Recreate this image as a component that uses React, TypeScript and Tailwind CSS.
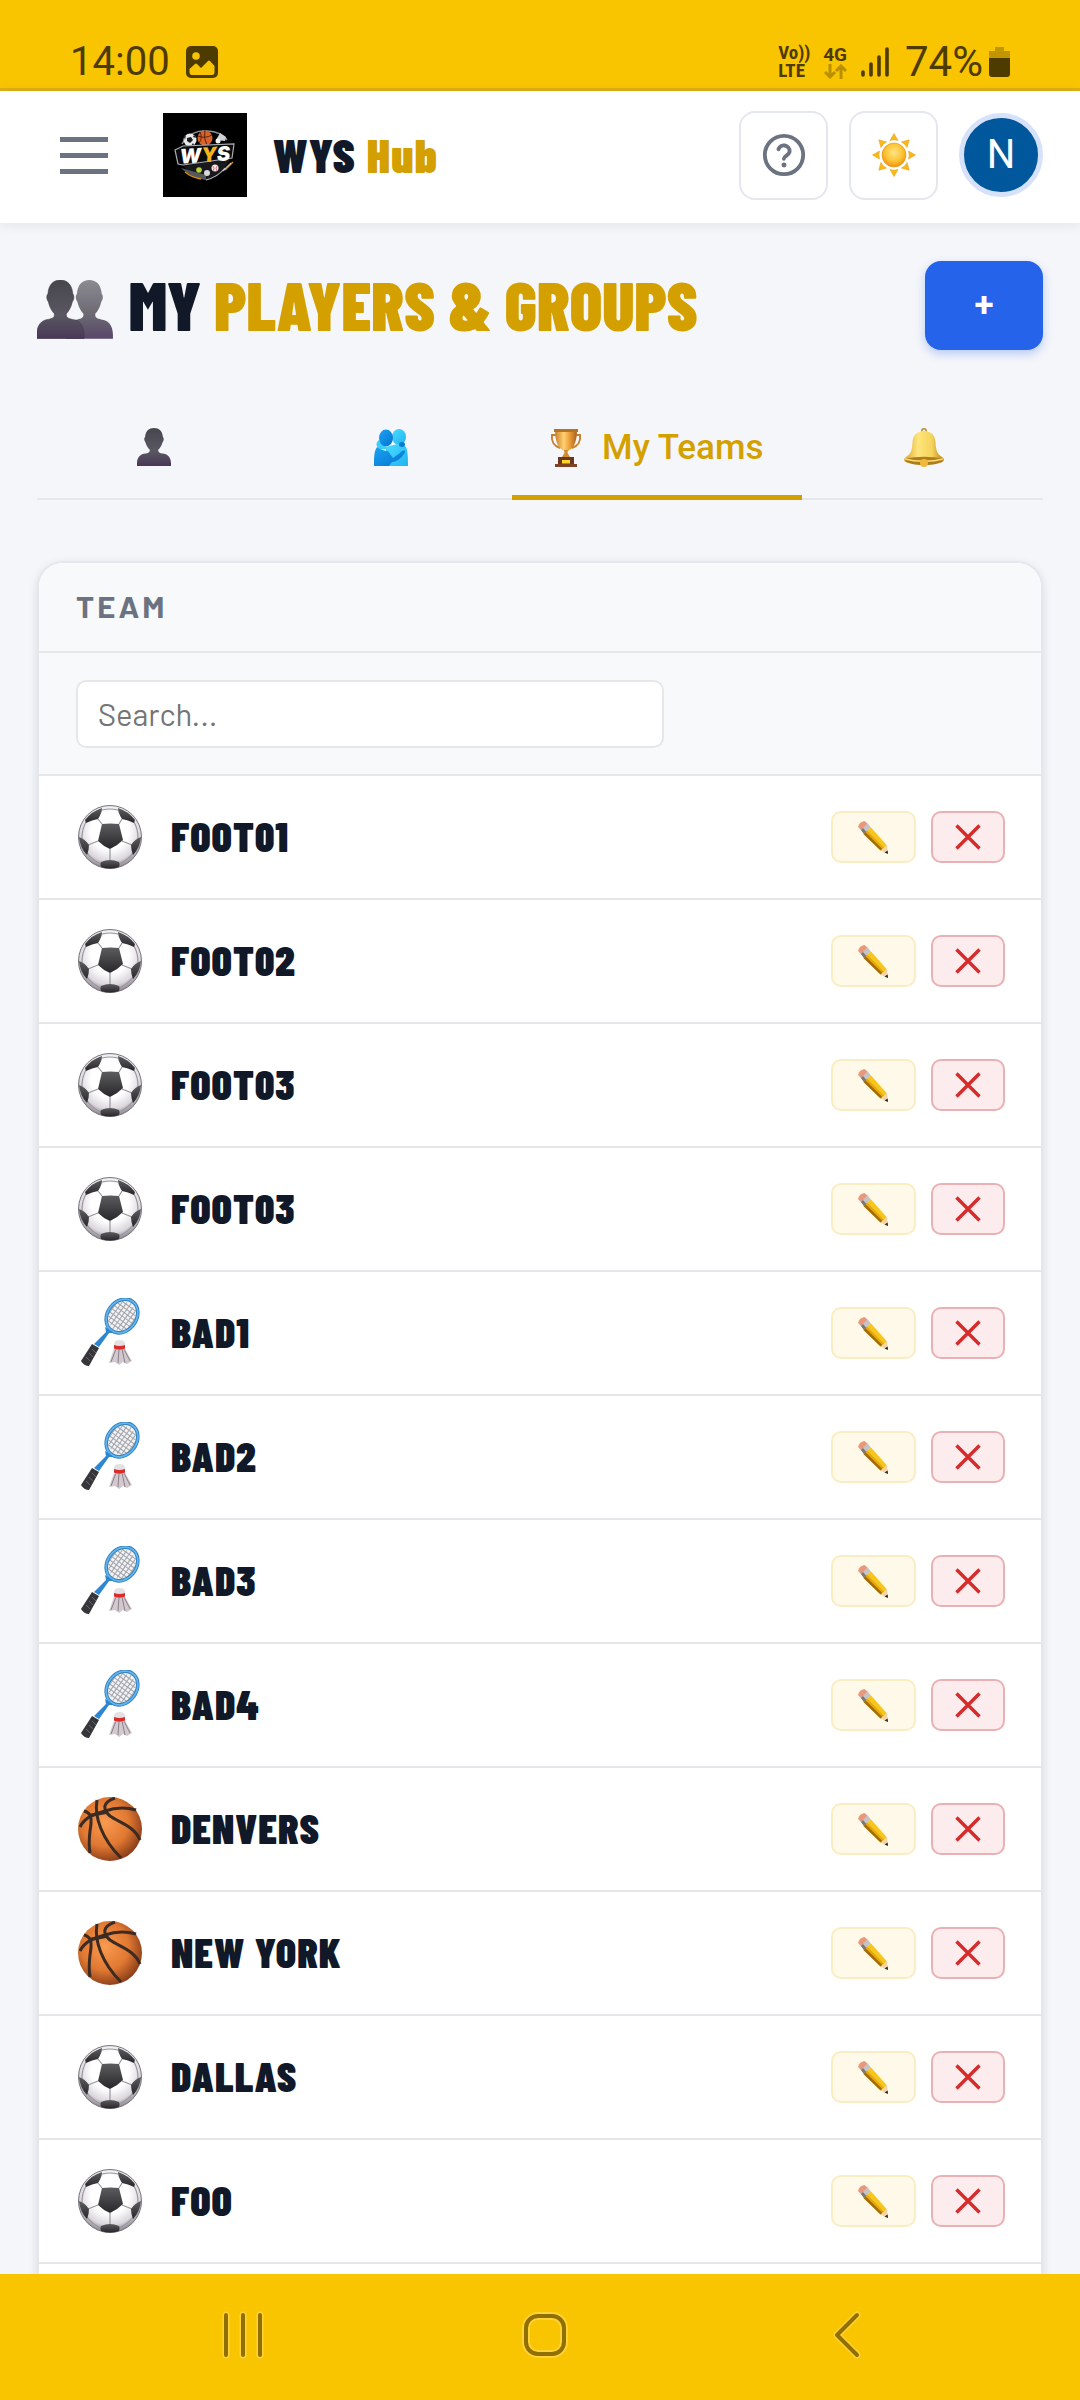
import React from "react";

type Sport = "soccer" | "badminton" | "basketball";

const TEAMS: { name: string; sport: Sport }[] = [
  { name: "FOOT01", sport: "soccer" },
  { name: "FOOT02", sport: "soccer" },
  { name: "FOOT03", sport: "soccer" },
  { name: "FOOT03", sport: "soccer" },
  { name: "BAD1", sport: "badminton" },
  { name: "BAD2", sport: "badminton" },
  { name: "BAD3", sport: "badminton" },
  { name: "BAD4", sport: "badminton" },
  { name: "DENVERS", sport: "basketball" },
  { name: "NEW YORK", sport: "basketball" },
  { name: "DALLAS", sport: "soccer" },
  { name: "FOO", sport: "soccer" },
];

/* Gradients shared by every illustration on the page. */
function Gradients() {
  return (
    <svg className="absolute size-0" aria-hidden="true">
      <defs>
        <radialGradient id="gBall" cx="0.5" cy="0.4" r="0.6">
          <stop offset="0.5" stopColor="#ffffff" />
          <stop offset="0.8" stopColor="#dcd8de" />
          <stop offset="1" stopColor="#86808a" />
        </radialGradient>
        <linearGradient id="gPatch" x1="0" y1="0" x2="0" y2="1">
          <stop offset="0" stopColor="#5c5c5e" />
          <stop offset="1" stopColor="#28262a" />
        </linearGradient>
        <radialGradient id="gBasket" cx="0.42" cy="0.4" r="0.62">
          <stop offset="0" stopColor="#fa9a50" />
          <stop offset="0.6" stopColor="#e07832" />
          <stop offset="1" stopColor="#8c3f1a" />
        </radialGradient>
        <radialGradient id="gSun" cx="0.5" cy="0.4" r="0.6">
          <stop offset="0" stopColor="#ffe488" />
          <stop offset="0.6" stopColor="#fcc433" />
          <stop offset="1" stopColor="#ee9113" />
        </radialGradient>
        <linearGradient id="gBustDark" x1="0" y1="0" x2="0" y2="1">
          <stop offset="0" stopColor="#47464d" />
          <stop offset="0.6" stopColor="#5a5762" />
          <stop offset="1" stopColor="#493757" />
        </linearGradient>
        <linearGradient id="gBustLight" x1="0" y1="0" x2="0" y2="1">
          <stop offset="0" stopColor="#8c8b91" />
          <stop offset="0.6" stopColor="#6b6872" />
          <stop offset="1" stopColor="#58466a" />
        </linearGradient>
        <linearGradient id="gGold" x1="0" y1="0" x2="1" y2="0">
          <stop offset="0" stopColor="#c9802a" />
          <stop offset="0.4" stopColor="#ffd071" />
          <stop offset="0.65" stopColor="#eda03c" />
          <stop offset="1" stopColor="#a8611c" />
        </linearGradient>
        <linearGradient id="gBell" x1="0" y1="0" x2="1" y2="0">
          <stop offset="0" stopColor="#d9a52c" />
          <stop offset="0.35" stopColor="#ffe57c" />
          <stop offset="0.7" stopColor="#f5d35c" />
          <stop offset="1" stopColor="#b98318" />
        </linearGradient>
        <linearGradient id="gHugDark" x1="0" y1="0" x2="1" y2="1">
          <stop offset="0" stopColor="#1aa3f5" />
          <stop offset="1" stopColor="#0672cf" />
        </linearGradient>
        <linearGradient id="gHugLight" x1="0" y1="0" x2="1" y2="1">
          <stop offset="0" stopColor="#4cdcff" />
          <stop offset="1" stopColor="#1fb2f0" />
        </linearGradient>
      </defs>
    </svg>
  );
}

const BUST =
  "M13 0 C19 0 23 4 23.500 11 C24.500 12 24.800 14 24 16 C23.500 17 23 17.500 23 18 C22 22 20 25 18 27 V28 C18 30 20 31 23 31.500 C29 32 33 36 33 44 V47 H-7 V44 C-7 36 -3 32 3 31.500 C6 31 8 30 8 28 V27 C6 25 4 22 3 18 C3 17.500 2.500 17 2 16 C1.200 14 1.500 12 2.500 11 C3 4 7 0 13 0 Z";

function Bust({ className }: { className: string }) {
  return (
    <svg className={className} viewBox="-7 0 40 47" preserveAspectRatio="none" aria-hidden="true">
      <path d={BUST} fill="url(#gBustDark)" />
    </svg>
  );
}

function BustPair({ className }: { className: string }) {
  return (
    <svg className={className} viewBox="0 0 76 59" aria-hidden="true">
      <g transform="translate(37 0) scale(1.18 1.25)">
        <path d={BUST} fill="url(#gBustLight)" />
      </g>
      <g transform="translate(8 0) scale(1.18 1.25)">
        <path d={BUST} fill="url(#gBustDark)" stroke="#3f3a49" strokeWidth="0.500" />
      </g>
    </svg>
  );
}

function Hug({ className }: { className: string }) {
  return (
    <svg className={className} viewBox="0 0 34 37" aria-hidden="true">
      <ellipse cx="25" cy="8" rx="7" ry="8" fill="url(#gHugLight)" />
      <path d="M12 18 C19 16 27 13 32 18 C34 22 34 30 34 37 H12 Z" fill="url(#gHugLight)" />
      <path d="M5 11 C1 14 2 18 6 20 L14 20 L9 15 Z" fill="#3ccffa" />
      <path d="M3 18 C6 20 10 22 14 22 L19 29 L26 24 C28 21 32 21 31 23 C30 26 24 33 18 33 L15 37 H0 C0 29 0 22 3 18 Z" fill="url(#gHugDark)" />
      <ellipse cx="12" cy="9" rx="7" ry="8.500" fill="url(#gHugDark)" />
      <ellipse cx="28" cy="15.500" rx="3" ry="2.500" fill="#087bd6" />
    </svg>
  );
}

function Trophy({ className }: { className: string }) {
  return (
    <svg className={className} viewBox="0 0 32 38" aria-hidden="true">
      <path d="M7 6 H2 C1 12 4 17 10 19 M25 6 H30 C31 12 28 17 22 19" fill="none" stroke="#c4802c" strokeWidth="2" />
      <path d="M5 1 H27 C27 10 25 19 18 22 H14 C7 19 5 10 5 1 Z" fill="url(#gGold)" />
      <path d="M4 0 H28 V3 H4 Z" fill="#b47424" />
      <path d="M14 21 H18 L17.500 24 L20 28 H12 L14.500 24 Z" fill="#cf8a35" />
      <path d="M8 28 H24 V36 H8 Z" fill="#6e3520" />
      <path d="M12 31 H20 V34.500 H12 Z" fill="#ffd72e" />
      <path d="M5 35 H27 V38 H5 Z" fill="#804327" />
    </svg>
  );
}

function Bell({ className }: { className: string }) {
  return (
    <svg className={className} viewBox="0 0 40 39" aria-hidden="true">
      <circle cx="20" cy="3" r="2.200" fill="none" stroke="#b98a22" strokeWidth="1.500" />
      <path d="M20 3 C28 3 31 8 31.500 14 C32 22 33 26 38 29 C41 31 40 34 37 34.500 C26 37 14 37 3 34.500 C0 34 -1 31 2 29 C7 26 8 22 8.500 14 C9 8 12 3 20 3 Z" fill="url(#gBell)" />
      <path d="M1 31 C12 28 28 28 39 31 C40 35 30 37 20 37 C10 37 0 35 1 31 Z" fill="#b07d1a" />
      <path d="M1 31 C12 34 28 34 39 31" fill="none" stroke="#f8dd74" strokeWidth="1.500" />
      <circle cx="20" cy="35" r="4" fill="#f0b93b" />
    </svg>
  );
}

function Sun({ className }: { className: string }) {
  return (
    <svg className={className} viewBox="-22 -22 44 44" aria-hidden="true">
      {[0, 45, 90, 135, 180, 225, 270, 315].map((a) => (
        <path key={a} d="M0 -21.500 L4 -14.500 Q0 -16 -4 -14.500 Z" fill="#f9b816" stroke="#e89a10" strokeWidth="0.500" transform={`rotate(${a})`} />
      ))}
      <circle r="12" fill="url(#gSun)" stroke="#e8941a" strokeWidth="0.600" />
    </svg>
  );
}

function Soccer({ className }: { className: string }) {
  return (
    <svg className={className} viewBox="0 0 64 64" aria-hidden="true">
      <circle cx="32" cy="32" r="31.500" fill="url(#gBall)" stroke="#77727c" strokeWidth="1" />
      <path d="M24 19 L20 14 M41 19 L44 14 M20 36 L10 40 M44 36 L54 40 M32 44 V55 M24 5 Q32 3 40 5 M8 17 Q4 24 4 33 M56 17 Q60 24 60 33 M9 48 Q14 55 23 59 M55 48 Q50 55 41 59" fill="none" stroke="#98959c" strokeWidth="1.200" />
      <g fill="url(#gPatch)">
        <path d="M24 19 Q32 18 41 19 L45 35 Q39 41 32 44 Q25 41 20 36 Z" />
        <path d="M7 15 Q14 6 24 3 Q24 8 20 14 Q14 15 8 18 Z" />
        <path d="M57 15 Q50 6 40 3 Q40 8 44 14 Q50 15 56 18 Z" />
        <path d="M1 32 Q7 34 11 40 Q11 45 9 50 Q2 43 1 32 Z" />
        <path d="M63 32 Q57 34 53 40 Q53 45 55 50 Q62 43 63 32 Z" />
        <path d="M23 57 Q32 53 41 57 Q42 59 41 62 Q32 65 23 62 Q22 59 23 57 Z" />
      </g>
    </svg>
  );
}

function Basketball({ className }: { className: string }) {
  return (
    <svg className={className} viewBox="0 0 64 64" aria-hidden="true">
      <circle cx="32" cy="32" r="32" fill="url(#gBasket)" />
      <g fill="none" stroke="#3c2b22" strokeWidth="3">
        <path d="M2 30 C7 20 16 17 27 14 C38 10 48 10 58 13" />
        <path d="M19 3 C16 20 24 42 43 61" />
        <path d="M6 14 C14 16 14 22 12 34 C11 42 11 50 12 56" />
        <path d="M37 1 C25 5 24 12 32 19 C42 26 56 29 62 43" />
      </g>
      <path d="M11 17 L30 13 L28 17 L13 20 Z" fill="#3c2b22" />
    </svg>
  );
}

function Badminton({ className }: { className: string }) {
  const strings = [-12, -8, -4, 0, 4, 8, 12];
  return (
    <svg className={className} viewBox="0 0 60 70" aria-hidden="true">
      <g transform="translate(42 18) rotate(36)">
        <ellipse rx="14.500" ry="18" fill="#f3f3f5" />
        <g stroke="#a2a4ab" strokeWidth="1">
          {strings.map((n) => (
            <path key={`v${n}`} d={`M${n} -${16 - Math.abs(n) * 0.6} V${16 - Math.abs(n) * 0.6}`} />
          ))}
          {strings.map((n) => (
            <path key={`h${n}`} d={`M-${13.5 - Math.abs(n) * 0.3} ${n} H${13.5 - Math.abs(n) * 0.3}`} />
          ))}
        </g>
        <ellipse rx="14.500" ry="18" fill="none" stroke="#2f7fbd" strokeWidth="3.600" />
        <ellipse rx="14.500" ry="18" fill="none" stroke="#62b4ee" strokeWidth="1.800" />
      </g>
      <path d="M25 29 L34 35 L29 35 L19 49 L14 46 L26 34 Z" fill="#2c86d0" />
      <path d="M12 46 L19 50 L9 68 Q4 68 1 63 Z" fill="#35353a" />
      <path d="M12 51 L16 55 M9 55 L13 59 M6 59 L10 63" stroke="#66666c" strokeWidth="1" />
      <path d="M34 51 L45 51 L52 63 L47 66 L43 64 L39 67 L35 64 L29 65 Z" fill="#d2c9ce" />
      <path d="M36 51 L31 64 M39 51 L38 65 M42 51 L45 65 M44 51 L50 63" stroke="#8c8188" strokeWidth="1" />
      <path d="M34 46 Q34 42 39.500 42 Q45 42 45 46 V51 Q39.500 53 34 51 Z" fill="#e2e2e2" />
      <path d="M34 47 Q39.500 49 45 47 V50.500 Q39.500 53 34 50.500 Z" fill="#dc2b2b" />
    </svg>
  );
}

function Pencil({ className }: { className: string }) {
  return (
    <svg className={className} viewBox="0 0 30 33" aria-hidden="true">
      <path d="M0 6 Q1 1 6.500 0 L10.500 3.500 L4 10 Z" fill="#e9987a" />
      <path d="M3 9 L9.500 2.500 L13 6.500 L6 13 Z" fill="#c4c4c8" />
      <path d="M3 9 L5 7 L8.500 11 L6 13 Z" fill="#77777e" />
      <path d="M5.500 13 L13 6.500 L29 24.500 L22.500 29.500 Z" fill="#f8c51c" />
      <path d="M5.500 13 L7.500 11 L24.500 28 L22.500 29.500 Z" fill="#a06a10" />
      <path d="M7.500 11 L9 9.500 L26 27 L24.500 28 Z" fill="#e0a50f" />
      <path d="M22.500 29.500 L29 24.500 L30 33 Z" fill="#f2d4a8" />
      <path d="M26.500 31.500 L29.700 29.500 L30 33 Z" fill="#2d2a2a" />
    </svg>
  );
}

function WysLogo({ className }: { className: string }) {
  return (
    <svg className={className} viewBox="0 0 84 84" role="img" aria-label="WYS logo">
      <rect width="84" height="84" fill="#000000" />
      <path d="M19 31 C24 21 35 17 45 18 C53 18 61 22 64 27" fill="none" stroke="#8f9296" strokeWidth="1.500" />
      <path d="M14 34 C18 56 28 64 43 67 C58 63 66 52 72 34 L60 46 L22 53 Z" fill="#17191c" />
      <path d="M18 55 C25 62 34 65 43 67 L43 62 C34 60 26 57 18 55 Z" fill="#55585d" />
      <path d="M22 59 C27 63 33 65 38 66 M62 57 L70 49" fill="none" stroke="#d68d18" strokeWidth="1.500" />
      <path d="M43 67 C51 65 58 60 62 55 M60 58 L68 50" fill="none" stroke="#b8bbc0" strokeWidth="1.200" />
      <circle cx="27" cy="27" r="6.500" fill="#e8e8ea" />
      <path d="M24 25 L28 24 L30 27 L27 30 L24 28 Z M21 24 L23 22 L22 27 Z M31 22 L33 25 L30 24 Z M28 33 L31 32 L30 30 Z" fill="#1b1b1d" />
      <circle cx="42" cy="25" r="7.500" fill="#d8622a" />
      <path d="M35 23 Q42 26 49 22 M42 17 Q40 25 44 32 M37 19 Q40 25 36 30" fill="none" stroke="#4a1d0c" strokeWidth="0.900" />
      <path d="M53 27 L57 20 L63 24 L62 28 Z" fill="#cfd2d6" />
      <circle cx="55" cy="28" r="2.500" fill="#f4f4f4" />
      <path d="M12 37 L20 33 L71 31 L69 45 L20 52 L15 51 Z" fill="#0b0c0e" stroke="#a9adb3" strokeWidth="1.200" />
      <text x="42" y="49" textAnchor="middle" fontFamily="Inter, sans-serif" fontSize="20" fontWeight="900" fontStyle="italic" fill="#ffffff" transform="rotate(-4 42 42)">
        W<tspan fill="#f5b21b">Y</tspan>S
      </text>
      <circle cx="36" cy="57" r="2.800" fill="#b9d438" />
      <circle cx="44" cy="60" r="3" fill="#d9d9dc" />
      <circle cx="52" cy="55" r="3.500" fill="#f1e9e9" />
      <path d="M50 53 Q52 55 50 58 M54 53 Q52 55 54 58" fill="none" stroke="#d14040" strokeWidth="0.700" />
    </svg>
  );
}

function SportIcon({ sport }: { sport: Sport }) {
  if (sport === "soccer") return <Soccer className="size-16" />;
  if (sport === "basketball") return <Basketball className="size-16" />;
  return <Badminton className="ml-0.5 h-[70px] w-[60px]" />;
}

function StatusBar() {
  return (
    <div className="flex h-[91px] shrink-0 items-end justify-between border-b-3 border-[#deae14] bg-[#f9c400] px-[70px] pb-0.5 font-[Roboto,sans-serif] text-[#4e3b00]">
      <div className="flex items-center gap-4">
        <span className="text-[40px] leading-[48px]">14:00</span>
        <svg className="size-8" viewBox="0 0 32 32" aria-hidden="true">
          <rect width="32" height="32" rx="5" fill="#4e3b00" />
          <circle cx="10" cy="10" r="3.800" fill="#f9c400" />
          <path d="M3.500 23 L9 18 Q10 17 11 18 L15 22 L22 15 Q23 14 24 15 L28.500 20 V26 Q28.500 29 26 29 H6 Q3.500 29 3.500 26 Z" fill="#f9c400" />
        </svg>
      </div>
      <div className="flex items-center">
        <div className="mr-3 flex w-[33px] flex-col font-['Roboto_Condensed',Roboto,sans-serif] text-[19px] leading-[18px] font-bold">
          <span>Vo))</span>
          <span>LTE</span>
        </div>
        <div className="mr-3.5 flex flex-col items-center text-[19px] leading-[18px] font-bold">
          <span>4G</span>
          <svg className="h-[15px] w-[23px]" viewBox="0 0 23 15" fill="none" stroke="#b98f00" strokeWidth="3" aria-hidden="true">
            <path d="M6 0 V13 M1 8 L6 13 L11 8 M17 15 V2 M12 7 L17 2 L22 7" />
          </svg>
        </div>
        <svg className="mr-4 h-[30px] w-7" viewBox="0 0 28 30" stroke="#4e3b00" strokeWidth="3.600" strokeLinecap="round" aria-hidden="true">
          <path d="M2 25 V28 M10 17 V28 M18 10 V28 M26 2 V28" />
        </svg>
        <span className="mr-1.5 text-[42px] leading-[48px]">74%</span>
        <svg className="h-[30px] w-[21px]" viewBox="0 0 21 30" aria-hidden="true">
          <path d="M6 0 H15 V4 H21 V12 H0 V4 H6 Z" fill="#c19600" />
          <path d="M0 11 H21 V27 Q21 30 18 30 H3 Q0 30 0 27 Z" fill="#4e3b00" />
        </svg>
      </div>
    </div>
  );
}

function Header() {
  return (
    <header className="relative z-10 flex h-33 shrink-0 items-center bg-white pr-[37px] pb-1 pl-[60px] shadow-[0_2px_12px_rgba(17,24,39,0.08)]">
      <button type="button" aria-label="Open menu" className="flex w-12 flex-col gap-[11px]">
        <span className="h-[5px] bg-[#6b7280]" />
        <span className="h-[5px] bg-[#6b7280]" />
        <span className="h-[5px] bg-[#6b7280]" />
      </button>
      <WysLogo className="ml-[55px] size-[84px]" />
      <div className="ml-[26px] pb-0.5 font-['Barlow_Condensed',sans-serif] text-[48px] leading-[56px] font-black tracking-wide text-[#111827]">
        WYS <span className="text-[#d4a000]">Hub</span>
      </div>
      <div className="ml-auto flex items-center gap-[21px]">
        <button type="button" aria-label="Help" className="flex size-[89px] items-center justify-center rounded-2xl border-2 border-[#e5e7ef] bg-white">
          <svg className="size-[46px]" viewBox="0 0 24 24" fill="none" stroke="#6b7280" strokeWidth="2" strokeLinecap="round" strokeLinejoin="round" aria-hidden="true">
            <circle cx="12" cy="12" r="10" />
            <path d="M9.090 9a3 3 0 0 1 5.830 1c0 2-3 2.500-3 4" />
            <path d="M12 17.200h.01" strokeWidth="2.600" />
          </svg>
        </button>
        <button type="button" aria-label="Light theme" className="flex size-[89px] items-center justify-center rounded-2xl border-2 border-[#e5e7ef] bg-white">
          <Sun className="size-11" />
        </button>
        <button type="button" aria-label="Account" className="flex size-[84px] items-center justify-center rounded-full border-5 border-[#d6e1fa] bg-[#01579b] font-[Roboto,sans-serif] text-[40px] leading-none text-white">
          N
        </button>
      </div>
    </header>
  );
}

function Tabs() {
  return (
    <nav aria-label="Sections" className="mt-[38px] flex h-28 border-b-2 border-[#e5e7eb]">
      <button type="button" aria-label="Players" className="flex flex-1 items-center justify-center pt-2">
        <Bust className="mr-1 h-[38px] w-[34px]" />
      </button>
      <button type="button" aria-label="Groups" className="flex flex-1 items-center justify-center pt-2">
        <Hug className="mr-1 h-[37px] w-[34px]" />
      </button>
      <button type="button" aria-current="page" className="-mb-0.5 flex items-center gap-5 border-b-5 border-[#d4a000] px-[38px] pt-3 font-[Roboto,sans-serif] text-[35px] leading-[42px] font-medium text-[#d4a000]">
        <Trophy className="h-[38px] w-8" />
        My Teams
      </button>
      <button type="button" aria-label="Notifications" className="flex flex-1 items-center justify-center pt-2 pl-1">
        <Bell className="h-[39px] w-10" />
      </button>
    </nav>
  );
}

function TeamTable() {
  return (
    <div className="mt-[61px] overflow-hidden rounded-t-[26px] border-2 border-b-0 border-[#e5e7ee] bg-white shadow-[0_3px_10px_rgba(17,24,39,0.12)]">
      <table className="w-full border-separate border-spacing-0 text-left">
        <thead className="bg-[#f8f9fb]">
          <tr>
            <th scope="col" className="h-[90px] border-b-2 border-[#e5e7eb] pb-0.5 pl-[37px] font-[Barlow,Inter,sans-serif] text-[31px] leading-9 font-bold tracking-widest text-[#6b7280]">
              TEAM
            </th>
            <th className="border-b-2 border-[#e5e7eb]" aria-label="Actions" />
          </tr>
          <tr>
            <td colSpan={2} className="h-[123px] border-b-2 border-[#e5e7eb] px-[37px]">
              <input
                type="text"
                aria-label="Search teams"
                placeholder="Search..."
                className="block h-[68px] w-[588px] max-w-full rounded-[10px] border-2 border-[#e5e7eb] bg-white px-5 font-[Barlow,Roboto,sans-serif] text-[31px] leading-9 text-[#111827] placeholder:text-[#757575]"
              />
            </td>
          </tr>
        </thead>
        <tbody>
          {TEAMS.map((team, i) => (
            <tr key={i}>
              <td className="h-31 border-b-2 border-[#e5e7eb] pl-[37px]">
                <div className="flex items-center">
                  <div className="flex w-[95px] shrink-0 pl-0.5">
                    <SportIcon sport={team.sport} />
                  </div>
                  <span className="pb-1 font-['Barlow_Condensed',sans-serif] text-[42px] leading-[50px] font-black tracking-wide text-[#111827]">{team.name}</span>
                </div>
              </td>
              <td className="h-31 border-b-2 border-[#e5e7eb] pr-[36px]">
                <div className="flex items-center justify-end gap-[15px]">
                  <button type="button" aria-label={`Edit ${team.name}`} className="flex h-[52px] w-[85px] items-center justify-center rounded-[10px] border-2 border-[#faedc2] bg-[#fef9e9]">
                    <Pencil className="mr-0.5 h-[33px] w-[30px]" />
                  </button>
                  <button type="button" aria-label={`Remove ${team.name}`} className="flex h-[52px] w-[74px] items-center justify-center rounded-[10px] border-2 border-[#e9b1b3] bg-[#fdeced]">
                    <svg className="size-[26px]" viewBox="0 0 26 26" stroke="#d52b2b" strokeWidth="3.400" aria-hidden="true">
                      <path d="M1.500 1.500 L24.500 24.500 M24.500 1.500 L1.500 24.500" />
                    </svg>
                  </button>
                </div>
              </td>
            </tr>
          ))}
          <tr aria-hidden="true">
            <td colSpan={2} className="h-31" />
          </tr>
        </tbody>
      </table>
    </div>
  );
}

function SystemNav() {
  return (
    <div className="grid h-[126px] shrink-0 grid-cols-3 items-center justify-items-center bg-[#f9c400] pr-[82px] pb-1 pl-[92px]">
      <button type="button" aria-label="Recent apps">
        <svg className="h-12 w-[46px]" viewBox="0 0 46 48" fill="none" strokeLinecap="round" aria-hidden="true">
          <path d="M6 4 V44 M23 4 V44 M40 4 V44" stroke="#ffd23a" strokeWidth="7" />
          <path d="M6 4 V44 M23 4 V44 M40 4 V44" stroke="#8f7000" strokeWidth="4" />
        </svg>
      </button>
      <button type="button" aria-label="Home">
        <svg className="size-12" viewBox="0 0 48 48" fill="none" aria-hidden="true">
          <rect x="5" y="5" width="38" height="38" rx="12" stroke="#ffd23a" strokeWidth="8" />
          <rect x="5" y="5" width="38" height="38" rx="12" stroke="#8f7000" strokeWidth="4" />
        </svg>
      </button>
      <button type="button" aria-label="Back">
        <svg className="h-12 w-[30px]" viewBox="0 0 30 48" fill="none" strokeLinecap="round" strokeLinejoin="round" aria-hidden="true">
          <path d="M25 4 L5 24 L25 44" stroke="#ffd23a" strokeWidth="7" />
          <path d="M25 4 L5 24 L25 44" stroke="#8f7000" strokeWidth="4" />
        </svg>
      </button>
    </div>
  );
}

export default function App() {
  return (
    <div className="flex h-screen flex-col bg-[#f5f6fa]">
      <Gradients />
      <StatusBar />
      <Header />
      <main className="min-h-0 flex-1 overflow-hidden px-[37px] pt-[38px]">
        <div className="flex items-center justify-between">
          <h1 className="flex items-center gap-4 font-['Barlow_Condensed',sans-serif] text-[67px] leading-[80px] font-black whitespace-nowrap text-[#111827]">
            <BustPair className="mt-2 h-[59px] w-[76px]" />
            <span className="pb-1">
              MY <span className="text-[#d4a000]">PLAYERS &amp; GROUPS</span>
            </span>
          </h1>
          <button type="button" aria-label="Add" className="flex h-[89px] w-[118px] items-center justify-center rounded-2xl bg-[#2563eb] font-[Roboto,sans-serif] text-[35px] leading-none font-bold text-white shadow-[0_4px_10px_rgba(37,99,235,0.3)]">
            +
          </button>
        </div>
        <Tabs />
        <TeamTable />
      </main>
      <SystemNav />
    </div>
  );
}
